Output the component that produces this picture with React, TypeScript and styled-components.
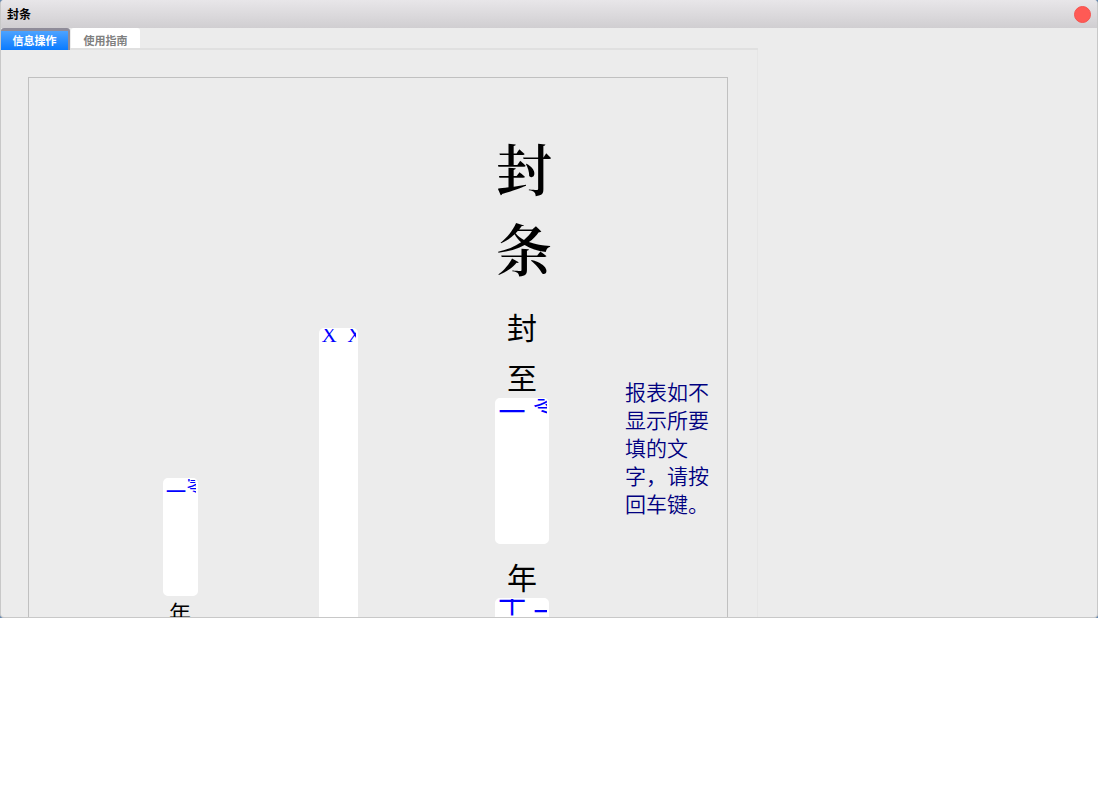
import React from "react";
import styled, { createGlobalStyle } from "styled-components";

const Global = createGlobalStyle`
  * { box-sizing: border-box; }
  body { margin: 0; background: #fff; font-family: "Noto Sans CJK SC", sans-serif; }
`;

const Backdrop = styled.div`
  background: #6688b0;
`;

const Window = styled.div`
  height: calc(100vh - 179px);
  min-height: 240px;
  display: flex;
  flex-direction: column;
  overflow: hidden;
  background: #ececec;
  border: 1px solid #c8c8c8;
  border-top: 0;
  border-radius: 4px;
`;

const TitleBar = styled.header`
  flex: none;
  height: 28px;
  padding: 0 6px;
  display: flex;
  align-items: center;
  justify-content: space-between;
  background: linear-gradient(#e8e6e9, #d0ced1);
`;

const Title = styled.h1`
  margin: 0;
  font-size: 12px;
  line-height: 28px;
  font-weight: 700;
`;

const CloseButton = styled.button`
  width: 17px;
  height: 17px;
  padding: 0;
  border: 1px solid #f5534f;
  border-radius: 50%;
  background: #ff5a55;
`;

const Tabs = styled.nav`
  flex: none;
  width: 757px;
  max-width: 100%;
  height: 22px;
  display: flex;
  gap: 1px;
  border-bottom: 2px solid #e0e0e0;
`;

const Tab = styled.button<{ $active?: boolean }>`
  width: 69px;
  height: ${(p) => (p.$active ? 22 : 20)}px;
  padding: ${(p) => (p.$active ? 0 : 3)}px 0 0;
  font: 700 11px/18px "Noto Sans CJK SC", sans-serif;
  color: ${(p) => (p.$active ? "#fff" : "#808080")};
  background: ${(p) => (p.$active ? "linear-gradient(#4da3ff, #0a7bff)" : "#fff")};
  border: 0 solid #8f8c99;
  border-width: ${(p) => (p.$active ? "3px 2px 0 0" : "0")};
  border-radius: 3px 3px 0 0;
  display: flex;
  justify-content: center;
  align-items: flex-start;
`;

const Panel = styled.main`
  flex: 1;
  min-height: 0;
  width: 757px;
  max-width: 100%;
  padding: 27px 29px 0 27px;
  overflow: hidden;
  border-right: 1px solid #e6e6e6;
`;

const Sheet = styled.section`
  height: 1000px;
  display: grid;
  grid-template-columns: 129px 44px 115px 42px 131px 64px 71px 1fr;
  align-items: start;
  border: 1px solid #c0c0c0;
`;

const Column = styled.div<{ $col: number; $top: number }>`
  grid-column: ${(p) => p.$col};
  grid-row: 1;
  padding-top: ${(p) => p.$top}px;
  display: flex;
  flex-direction: column;
  align-items: center;
`;

const Heading = styled.h2`
  margin: 0 0 22px;
  width: 60px;
  font: 600 56px/80px "Noto Serif CJK SC", "Noto Sans CJK SC", serif;
  text-align: right;
`;

const Word = styled.label<{ $size: number; $line: number; $gap?: number }>`
  font-size: ${(p) => p.$size}px;
  line-height: ${(p) => p.$line}px;
  font-weight: 400;
  margin-bottom: ${(p) => p.$gap ?? 0}px;
`;

const Field = styled.textarea<{ $w: number; $h: number; $size: number; $line: number; $gap?: number }>`
  display: block;
  width: ${(p) => p.$w}px;
  height: ${(p) => p.$h}px;
  margin: 0 0 ${(p) => p.$gap ?? 0}px;
  padding: 0 1px;
  border: solid #fff;
  border-width: 1px 2px;
  border-radius: 5px;
  background: #fff;
  color: #00f;
  font-family: "Liberation Serif", "Noto Sans CJK SC", serif;
  font-size: ${(p) => p.$size}px;
  line-height: ${(p) => p.$line}px;
  white-space: pre;
  overflow: hidden;
  resize: none;
`;

const Note = styled.p`
  grid-column: 8;
  grid-row: 1;
  margin: 299px 14px 0 0;
  font-size: 21px;
  line-height: 28px;
  font-weight: 350;
  color: #000080;
`;

export default function App() {
  return (
    <>
      <Global />
      <Backdrop>
        <Window>
          <TitleBar>
            <Title>封条</Title>
            <CloseButton aria-label="关闭" />
          </TitleBar>
          <Tabs>
            <Tab $active>信息操作</Tab>
            <Tab>使用指南</Tab>
          </Tabs>
          <Panel>
            <Sheet>
              <Column $col={2} $top={400}>
                <Field id="signYear" $w={35} $h={118} $size={21} $line={12} defaultValue="二零" />
                <Word htmlFor="signYear" $size={22} $line={30}>年</Word>
              </Column>
              <Column $col={4} $top={250}>
                <Field aria-label="单位" $w={39} $h={400} $size={21} $line={12} defaultValue="X  X" />
              </Column>
              <Column $col={6} $top={49}>
                <Heading>封条</Heading>
                <Word as="span" $size={30} $line={34} $gap={16}>封</Word>
                <Word as="span" $size={30} $line={34} $gap={5}>至</Word>
                <Field id="year" $w={54} $h={146} $size={28} $line={10} $gap={15} defaultValue="二 零" />
                <Word htmlFor="year" $size={30} $line={34} $gap={5}>年</Word>
                <Field aria-label="月" $w={54} $h={146} $size={28} $line={10} defaultValue="十 二" />
              </Column>
              <Note>报表如不显示所要填的文字，请按回车键。</Note>
            </Sheet>
          </Panel>
        </Window>
      </Backdrop>
    </>
  );
}
